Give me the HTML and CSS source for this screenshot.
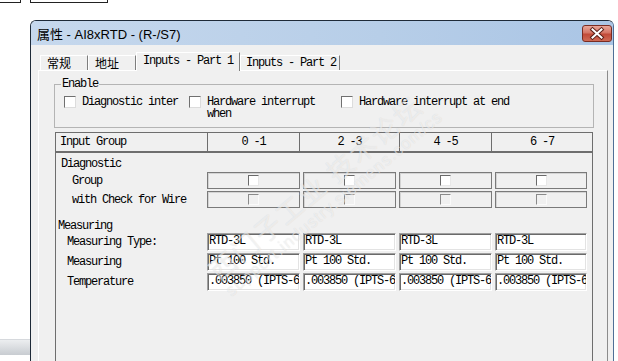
FILE: index.html
```html
<!DOCTYPE html>
<html lang="zh">
<head>
  <meta charset="UTF-8">
  <title>属性 - AI8xRTD - (R-/S7)</title>
  <link rel="stylesheet" href="styles.css">
</head>
<body>
  <div class="top-strip">
    <span class="stub stub-a"></span>
    <span class="stub stub-b"></span>
  </div>
  <div class="behind"></div>

  <div class="window">
    <div class="titlebar">
      <span class="title">属性 - AI8xRTD - (R-/S7)</span>
      <button class="close" aria-label="close">
        <svg width="30" height="17" viewBox="0 0 30 17">
          <path d="M10.5 4.5 L19.5 12.5 M19.5 4.5 L10.5 12.5" stroke="#5a1f17" stroke-width="4" stroke-linecap="square"/>
          <path d="M10.5 4.5 L19.5 12.5 M19.5 4.5 L10.5 12.5" stroke="#fff" stroke-width="2" stroke-linecap="square"/>
        </svg>
      </button>
    </div>

    <div class="client">
      <div class="tabs">
        <span class="tab tab-cn tab-w48">常规</span>
        <span class="tab tab-cn tab-w48">地址</span>
        <span class="tab active">Inputs - Part 1</span>
        <span class="tab tab-last">Inputs - Part 2</span>
      </div>

      <div class="panel">
        <fieldset class="enable">
          <legend>Enable</legend>
          <div class="opts">
            <label class="opt opt-1"><span class="cb"></span><span class="opt-text">Diagnostic inter</span></label>
            <label class="opt opt-2"><span class="cb"></span><span class="opt-text">Hardware interrupt when</span></label>
            <label class="opt"><span class="cb"></span><span class="opt-text">Hardware interrupt at end</span></label>
          </div>
        </fieldset>

        <div class="grid">
          <div class="grid-head">
            <div class="hcell hcell-first">Input Group</div>
            <div class="hcell">0 -1</div>
            <div class="hcell">2 -3</div>
            <div class="hcell">4 -5</div>
            <div class="hcell">6 -7</div>
          </div>

          <div class="grid-body">
            <div class="section section-diag">Diagnostic</div>
            <div class="row">
              <div class="row-label row-label-deep">Group</div>
              <div class="cbcell"><span class="mini"></span></div>
              <div class="cbcell"><span class="mini"></span></div>
              <div class="cbcell"><span class="mini"></span></div>
              <div class="cbcell"><span class="mini"></span></div>
            </div>
            <div class="row">
              <div class="row-label row-label-deep">with Check for Wire</div>
              <div class="cbcell"><span class="mini off"></span></div>
              <div class="cbcell"><span class="mini off"></span></div>
              <div class="cbcell"><span class="mini off"></span></div>
              <div class="cbcell"><span class="mini off"></span></div>
            </div>

            <div class="section section-meas">Measuring</div>
            <div class="row row-first">
              <div class="row-label">Measuring Type:</div>
              <div class="field">RTD-3L</div>
              <div class="field">RTD-3L</div>
              <div class="field">RTD-3L</div>
              <div class="field">RTD-3L</div>
            </div>
            <div class="row">
              <div class="row-label">Measuring</div>
              <div class="field">Pt 100 Std.</div>
              <div class="field">Pt 100 Std.</div>
              <div class="field">Pt 100 Std.</div>
              <div class="field">Pt 100 Std.</div>
            </div>
            <div class="row">
              <div class="row-label">Temperature</div>
              <div class="field">.003850 (IPTS-6</div>
              <div class="field">.003850 (IPTS-6</div>
              <div class="field">.003850 (IPTS-6</div>
              <div class="field">.003850 (IPTS-6</div>
            </div>
          </div>
        </div>
      </div>
    </div>
  </div>

  <div class="watermark">
    <div class="wm-big">西门子工业 技术论坛</div>
    <div class="wm-small">support.industry.siemens.com/cs</div>
  </div>
</body>
</html>
```

FILE: styles.css
```css
html, body {
  margin: 0;
  height: 361px;
  overflow: hidden;
}

body {
  position: relative;
  background: #fff;
  color: #000;
  font-family: "Liberation Mono", monospace;
  font-size: 12px;
  letter-spacing: -1.2px;
}

/* bits of other windows on the desktop */
.top-strip {
  height: 20px;
  display: flex;
  align-items: flex-start;
}

.stub {
  height: 2px;
  border-bottom: 1px solid #222;
}

.stub-a {
  width: 20px;
  border-right: 1px solid #222;
}

.stub-b {
  width: 76px;
  margin-left: 9px;
  border-left: 1px solid #222;
  border-right: 1px solid #222;
}

.behind {
  position: absolute;
  left: 0;
  top: 339px;
  width: 30px;
  height: 15px;
  border-top: 1px solid #d6d9dd;
  background: linear-gradient(#eceef0, #c8ccd1);
}

/* dialog window */
.window {
  margin-left: 30px;
  width: 582px;
  height: 350px;
  border: 1px solid #1e2a38;
  border-right-color: #4f6f96;
  border-bottom: none;
  border-radius: 6px 6px 0 0;
  background: #f0f0f0;
  display: flex;
  flex-direction: column;
}

.titlebar {
  height: 24px;
  display: flex;
  align-items: center;
  padding-left: 6px;
  border-radius: 5px 5px 0 0;
  background: linear-gradient(to right, #c6d8ed, #b7cee8 60%, #aac5e5);
}

.title {
  font-family: "Liberation Sans", "Noto Sans CJK SC", sans-serif;
  font-size: 13px;
  letter-spacing: 0;
}

.close {
  align-self: flex-start;
  margin: 4px 1px 0 auto;
  width: 30px;
  height: 17px;
  padding: 0;
  border: 1px solid #7a2c22;
  border-radius: 3px;
  background: linear-gradient(#e9a699, #d57565 45%, #c24a38 55%, #cf6a55);
  display: block;
}

.close svg {
  display: block;
  margin: -1px 0 0 -1px;
}

.client {
  flex: 1;
  display: flex;
  flex-direction: column;
  padding: 7px 5px 0 7px;
}

/* tabs */
.tabs {
  position: relative;
  z-index: 1;
  height: 19px;
  display: flex;
  align-items: flex-end;
  padding-left: 2px;
}

.tab {
  box-sizing: border-box;
  height: 15px;
  margin-bottom: 1px;
  padding-left: 6px;
  line-height: 14px;
  border-top: 1px solid #fff;
  border-left: 1px solid #fff;
  border-right: 1px solid #7e7e7e;
  background: #f0f0f0;
  white-space: nowrap;
}

.tab-cn {
  font-family: "Noto Sans CJK SC", sans-serif;
  letter-spacing: 0;
}

.tab-w48 {
  width: 48px;
}

.tab.active {
  width: 104px;
  height: 19px;
  margin-bottom: 0;
  padding-bottom: 2px;
  line-height: 16px;
}

.tab-last {
  width: 100px;
  padding-left: 5px;
}

.panel {
  flex: 1;
  margin-top: -1px;
  padding: 0 13px 0 15px;
  border-top: 1px solid #fff;
  border-left: 1px solid #fff;
  border-right: 1px solid #8c8c8c;
  display: flex;
  flex-direction: column;
}

/* Enable group */
.enable {
  box-sizing: border-box;
  width: 540px;
  margin: 7px 0 0;
  padding: 6px 0 7px 6px;
  border: 1px solid #b4b4b4;
  min-width: 0;
}

.enable legend {
  padding: 0 1px;
  line-height: 12px;
}

.opts {
  display: flex;
  margin-left: 3px;
  line-height: 12px;
}

.opt {
  display: flex;
  align-items: flex-start;
  gap: 6px;
}

.opt-1 {
  width: 125px;
}

.opt-2 {
  width: 152px;
}

.opt-2 .opt-text {
  max-width: 112px;
}

.cb {
  box-sizing: border-box;
  flex: none;
  width: 12px;
  height: 12px;
  background: #fff;
  border: 1px solid #dcdcdc;
  border-top-color: #707070;
  border-left-color: #707070;
}

/* input group table */
.grid {
  flex: 1;
  box-sizing: border-box;
  width: 538px;
  margin: 4px 0 0 1px;
  border: 1px solid #6e6e6e;
  border-bottom: none;
}

.grid-head {
  box-sizing: border-box;
  height: 20px;
  display: grid;
  grid-template-columns: 151px 92px 100px 92px 101px;
  border-bottom: 2px solid #6e6e6e;
  line-height: 18px;
}

.hcell {
  text-align: center;
  border-left: 1px solid #6e6e6e;
}

.hcell-first {
  text-align: left;
  padding-left: 4px;
  border-left: none;
}

.grid-body {
  padding-top: 5px;
}

.section {
  line-height: 12px;
}

.section-diag {
  padding-left: 5px;
}

.section-meas {
  margin-top: 12px;
  padding-left: 2px;
}

.row {
  display: grid;
  grid-template-columns: 148px 93px 93px 93px 92px;
  column-gap: 3px;
  align-items: center;
  margin-top: 2px;
  white-space: nowrap;
}

.row-first {
  margin-top: 1px;
}

.row-label {
  padding-left: 11px;
}

.row-label-deep {
  padding-left: 16px;
}

.cbcell {
  box-sizing: border-box;
  height: 17px;
  border: 1px solid #7a7a7a;
  box-shadow: inset 1px 1px 0 #d4d4d4;
  display: flex;
  align-items: center;
  justify-content: center;
}

.mini {
  box-sizing: border-box;
  width: 11px;
  height: 11px;
  background: #fff;
  border: 1px solid #e8e8e8;
  border-top-color: #6a6a6a;
  border-left-color: #6a6a6a;
}

.mini.off {
  background: #f0f0f0;
  border-top-color: #8a8a8a;
  border-left-color: #8a8a8a;
  border-right-color: #fafafa;
  border-bottom-color: #fafafa;
}

.field {
  box-sizing: border-box;
  height: 18px;
  padding-left: 1px;
  line-height: 15px;
  overflow: hidden;
  background: #fff;
  border: 1px solid #fff;
  border-top-color: #a0a0a0;
  border-left-color: #a0a0a0;
  box-shadow: inset 1px 1px 0 #6a6a6a, inset -1px -1px 0 #e3e3e3;
}

/* faint forum watermark laid over the screenshot */
.watermark {
  position: absolute;
  left: 135px;
  top: 182px;
  transform: rotate(-40deg);
  transform-origin: 0 0;
  pointer-events: none;
  color: rgba(255, 255, 255, 0.55);
  text-shadow: 0 0 1px rgba(0, 0, 0, 0.12);
  letter-spacing: 2px;
  font-family: "Noto Sans CJK SC", sans-serif;
}

.wm-big {
  margin-top: 105px;
  font-size: 27px;
  line-height: 30px;
  white-space: nowrap;
}

.wm-small {
  font-family: "Liberation Sans", sans-serif;
  font-size: 17px;
  letter-spacing: 1px;
  white-space: nowrap;
}
```
